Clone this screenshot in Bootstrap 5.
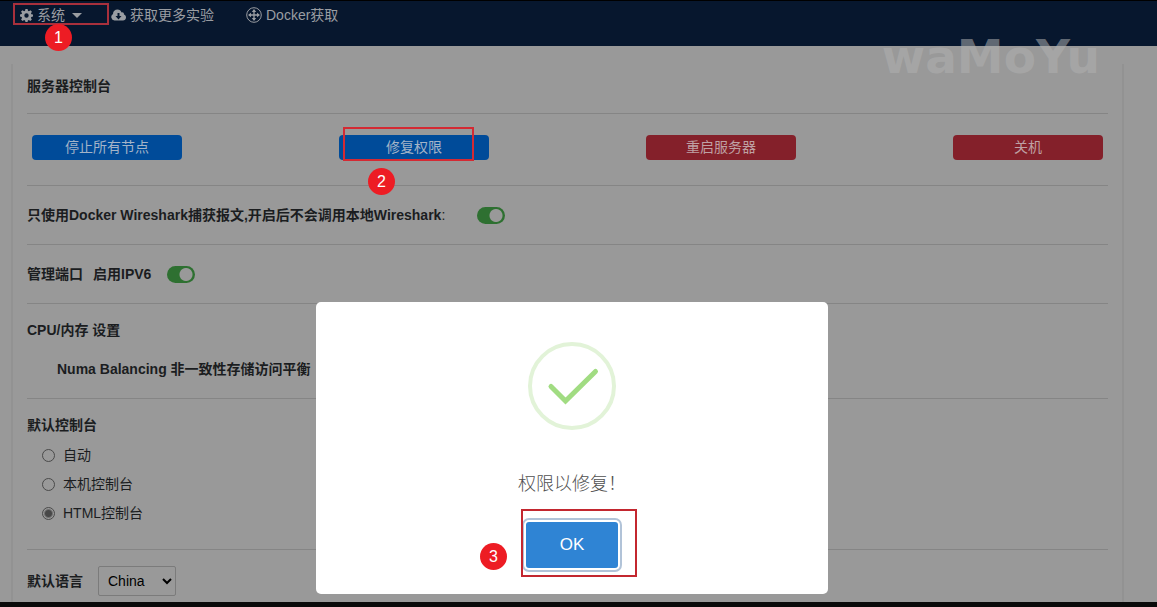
<!DOCTYPE html>
<html lang="zh-CN">
<head>
<meta charset="utf-8">
<meta name="viewport" content="width=device-width, initial-scale=1">
<title>服务器控制台</title>
<link href="https://cdn.jsdelivr.net/npm/bootstrap@5.3.0/dist/css/bootstrap.min.css" rel="stylesheet">
<style>
  body { background: #999; color: #1b1d1f; font: 14px/20px "Liberation Sans", "Noto Sans CJK SC", sans-serif; }

  /* Top bar */
  .topbar { background: #07172e; border-top: 1px solid #000; height: 46px; padding-top: 3px; color: #9a9da2; }
  .topbar a { color: inherit; text-decoration: none; line-height: 22px; }
  .menu-system { margin-left: 20px; width: 91px; }
  .menu-docker { margin-left: 32px; }
  .caret { border: 5px solid transparent; border-top-color: currentColor; border-bottom: 0; margin-left: 7px; }

  /* Console panel */
  .console { margin: 18px 33px 0 11px; padding: 0 14px; border: solid #929292; border-width: 0 2px; }
  .console section { border-bottom: 1px solid #858585; }
  .console section:last-child { border-bottom: 0; padding: 16px 0 6px; }
  .console h2, .console label.fw-bold { font-size: 14px; line-height: 20px; font-weight: 700; margin: 0; }
  .sec-title { padding: 12px 0 17px; }
  .sec-actions { padding: 21px 5px 25px; }
  .sec-switch { padding: 19px 0; height: 59px; }
  .sec-cpu { padding: 16px 0 19px; gap: 19px; }
  .sec-radio { padding: 16px 0 21px; }
  .port-title { padding-right: 10px; }
  .numa { padding-left: 30px; }
  .act { width: 150px; height: 25px; padding: 0; border: 0; font-size: 14px; line-height: 25px; border-radius: 4px; }
  .act-blue, .act-blue:hover { background: #004b99; color: #a3b4c8; }
  .act-red, .act-red:hover { background: #84202a; color: #bfa0a4; }
  .toggle.form-check-input { width: 28px; height: 17px; margin: 0 0 0 16px; border: 0; background-color: #2e7031; background-image: radial-gradient(circle at 19px 50%, #999 6px, transparent 7px); background-size: 100% 100%; background-position: 0 0; border-radius: 9px; }
  .toggle.toggle-far { margin-left: 32px; }
  .picks { padding: 6px 0 0 15px; }
  .pick { line-height: 29px; }
  .pick .form-check-input { width: 13px; height: 13px; margin: 0 8px 0 0; background-color: transparent; border: 1px solid #4a4a4a; box-shadow: none; }
  .pick .form-check-input:checked { background-image: radial-gradient(circle, #484848 3px, transparent 5px); background-size: 100% 100%; }
  .lang { width: 78px; height: 30px; margin-left: 15px; padding: 0 5px; border: 1px solid #7b7b7b; border-radius: 2px; background: #999; color: #000; font-size: 14px; }
  .bottombar { height: 5px; background: #0a0a0a; }
  .watermark { position: absolute; top: 33px; right: 57px; font: 700 47px/48px "DejaVu Sans", sans-serif; color: rgba(176,176,176,.55); pointer-events: none; }

  /* Step annotations */
  .frame { position: absolute; border: 2px solid #c3272f; pointer-events: none; z-index: 2; }
  .marker { position: absolute; width: 27px; height: 27px; border-radius: 50%; background: #ed1c24; color: #fff; font-size: 16px; line-height: 27px; text-align: center; z-index: 3; }
  .frame-1 { left: -7px; top: -1px; width: 96px; height: 22px; border-color: #a8303c; }
  .marker-1 { left: 25px; top: 20px; }
  .frame-2 { left: 4px; top: -8px; width: 131px; height: 34px; border-color: #d42a33; }
  .marker-2 { left: 29px; top: 33px; }
  .frame-3 { left: -5px; top: -13px; width: 116px; height: 68px; }
  .marker-3 { left: -46px; top: 21px; }

  /* Success dialog */
  .overlay { position: fixed; inset: 0 13px 13px 0; z-index: 10; }
  .dialog { width: 512px; background: #fff; border-radius: 5px; padding: 40px 20px 26px; }
  .dialog p { margin: 41px 0 24px; font-size: 18px; line-height: 27px; font-weight: 300; color: #4f4f4f; }
  .ok-btn, .ok-btn:hover { width: 92px; height: 46px; background: #2f84d4; color: #fff; border: 0; border-radius: 3px; font-size: 17px; box-shadow: 0 0 0 2px #fff, 0 0 0 4px #b1c3d8; }
</style>
</head>
<body>
<header class="topbar d-flex align-items-start">
  <div class="menu-system position-relative">
    <a href="#" class="d-flex align-items-center">
      <svg class="me-1" width="13" height="13" viewBox="0 0 16 16" fill="currentColor" fill-rule="evenodd"><path d="M6.700 0h2.600l.5 2.200 1.200.5 1.900-1.200 1.800 1.800-1.200 1.900.5 1.200 2 .4v2.500l-2.100.5-.5 1.200 1.200 1.900-1.800 1.800-1.900-1.200-1.200.5L9.300 16H6.700l-.5-2-1.200-.5-1.900 1.200-1.800-1.800L2.500 11 2 9.800 0 9.300V6.700l2-.4.5-1.200-1.200-1.900 1.800-1.800L5 2.700l1.200-.5zM8 5.300a2.700 2.700 0 1 0 0 5.400 2.700 2.700 0 0 0 0-5.400z"/></svg>
      <span>系统</span><span class="caret"></span>
    </a>
    <span class="frame frame-1"></span><span class="marker marker-1">1</span>
  </div>
  <a href="#" class="d-flex align-items-center">
    <svg class="me-1" width="15" height="12" viewBox="0 0 30 24"><path fill="currentColor" fill-rule="evenodd" d="M7 23a7 7 0 0 1-3-13C4 4 8 1 13 1c4 0 7 2 8 6 3-1 5 1 5 4 3 1 4 3 4 6 0 4-3 6-6 6zM13 8v6H9l6 7 6-7h-4V8z"/></svg>
    <span>获取更多实验</span>
  </a>
  <a href="#" class="menu-docker d-flex align-items-center">
    <svg class="me-1" width="16" height="16" viewBox="0 0 16 16" fill="none" stroke="currentColor"><circle cx="8" cy="8" r="7.300"/><path d="M8 3v10M3 8h10" stroke-width="1.300"/><path fill="currentColor" stroke="none" d="M8 2 10.200 5H5.800zM8 14 5.800 11h4.400zM2 8l3-2.200v4.400zM14 8l-3 2.200V5.800z"/></svg>
    <span>Docker获取</span>
  </a>
</header>

<main class="console">
  <section class="sec-title"><h2>服务器控制台</h2></section>
  <section class="sec-actions d-flex justify-content-between">
    <button type="button" class="btn act act-blue">停止所有节点</button>
    <div class="position-relative d-flex">
      <button type="button" class="btn act act-blue">修复权限</button>
      <span class="frame frame-2"></span><span class="marker marker-2">2</span>
    </div>
    <button type="button" class="btn act act-red">重启服务器</button>
    <button type="button" class="btn act act-red">关机</button>
  </section>
  <section class="sec-switch d-flex align-items-center">
    <label for="wireshark"><b>只使用Docker Wireshark捕获报文,开启后不会调用本地Wireshark</b>:</label>
    <input id="wireshark" type="checkbox" role="switch" class="form-check-input toggle toggle-far" checked>
  </section>
  <section class="sec-switch d-flex align-items-center">
    <h2 class="port-title">管理端口</h2>
    <label class="fw-bold" for="ipv6">启用IPV6</label>
    <input id="ipv6" type="checkbox" role="switch" class="form-check-input toggle" checked>
  </section>
  <section class="sec-cpu d-grid">
    <h2>CPU/内存 设置</h2>
    <h2 class="numa">Numa Balancing 非一致性存储访问平衡</h2>
  </section>
  <section class="sec-radio">
    <h2>默认控制台</h2>
    <div class="picks">
      <div class="pick d-flex align-items-center"><input class="form-check-input" type="radio" name="console" id="c1"><label for="c1">自动</label></div>
      <div class="pick d-flex align-items-center"><input class="form-check-input" type="radio" name="console" id="c2"><label for="c2">本机控制台</label></div>
      <div class="pick d-flex align-items-center"><input class="form-check-input" type="radio" name="console" id="c3" checked><label for="c3">HTML控制台</label></div>
    </div>
  </section>
  <section class="d-flex align-items-center">
    <label class="fw-bold" for="lang">默认语言</label>
    <select id="lang" class="lang"><option>China</option><option>English</option></select>
  </section>
</main>
<div class="bottombar"></div>
<div class="watermark">waMoYu</div>

<div class="overlay d-flex justify-content-center align-items-end">
  <div class="dialog text-center" role="dialog" aria-label="权限以修复">
    <svg class="d-block mx-auto" width="88" height="88" viewBox="0 0 88 88" fill="none"><circle cx="44" cy="44" r="42" stroke="#e2f3d8" stroke-width="4"/><path d="M23 44.500 37.500 59 67.500 29.500" stroke="#a1dc82" stroke-width="5" stroke-linecap="round"/></svg>
    <p>权限以修复！</p>
    <div class="position-relative d-inline-flex align-top">
      <button type="button" class="btn ok-btn">OK</button>
      <span class="frame frame-3"></span><span class="marker marker-3">3</span>
    </div>
  </div>
</div>
<script src="https://cdn.jsdelivr.net/npm/bootstrap@5.3.0/dist/js/bootstrap.bundle.min.js"></script>
</body>
</html>
